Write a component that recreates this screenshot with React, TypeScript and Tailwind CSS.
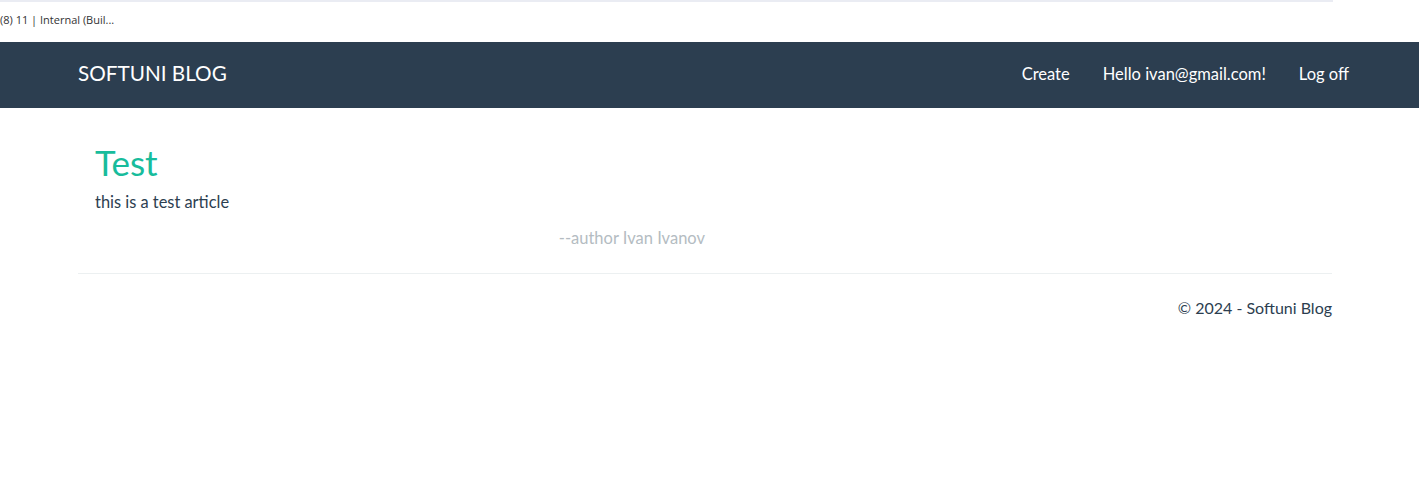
export default function App() {
  return (
    <div className="min-h-[496px] bg-white font-['Lato','Open_Sans',sans-serif] text-[16.5px] leading-[1.42857] text-[#2c3e50]">
      {/* tab strip leftover */}
      <div className="h-[42px]">
        <div className="h-[2px] w-[1333px] bg-[#eaecf3]" />
        <div className="pt-[11px] font-['Open_Sans',sans-serif] text-[11px] leading-[14px] text-[#333]">
          (8) 11 | Internal (Buil...
        </div>
      </div>

      {/* Navbar */}
      <nav className="h-[66px] bg-[#2c3e50] text-white">
        <div className="ml-[78px] flex h-full w-[1271px] items-center justify-between">
          <a className="mb-[3px] text-[20.7px] leading-none">SOFTUNI BLOG</a>
          <ul className="flex items-center gap-[33px]">
            <li>Create</li>
            <li>Hello ivan@gmail.com!</li>
            <li>Log off</li>
          </ul>
        </div>
      </nav>

      {/* Content */}
      <main className="ml-[78px] w-[1254px]">
        <article className="w-[627px] pl-[17px] pt-[35px]">
          <h2 className="mb-[8px] text-[35px] leading-[1.1] text-[#18bc9c]">Test</h2>
          <p className="mb-[14px] text-[16.4px]">this is a test article</p>
          <p className="text-right text-[#b4bcc2]">--author Ivan Ivanov</p>
        </article>
        <hr className="mt-[23px] border-t border-[#ecf0f1]" />
        <footer className="mt-[23px] text-right text-[16px]">© 2024 - Softuni Blog</footer>
      </main>
    </div>
  );
}
